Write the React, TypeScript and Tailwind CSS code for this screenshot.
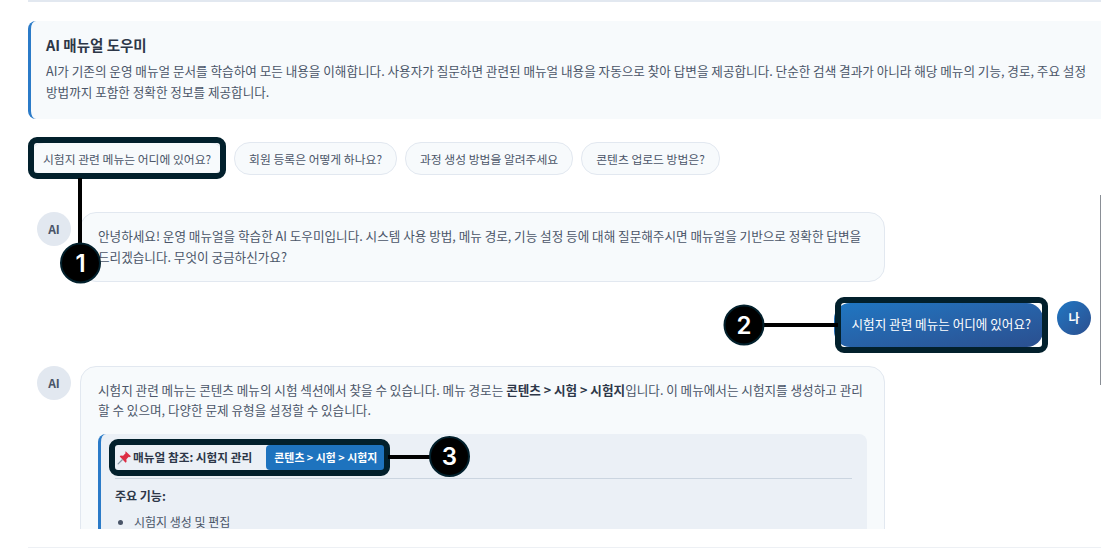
const font = { fontFamily: '"Noto Sans CJK KR", Inter, sans-serif' };

const chips = ["시험지 관련 메뉴는 어디에 있어요?", "회원 등록은 어떻게 하나요?", "과정 생성 방법을 알려주세요", "콘텐츠 업로드 방법은?"];

function AiAvatar() {
  return (
    <div className="w-[34px] h-[34px] rounded-full bg-[#e2e8f0] text-[#4a5568] text-[12px] font-bold flex items-center justify-center shrink-0">
      AI
    </div>
  );
}

function PinIcon() {
  return (
    <svg width="15" height="15" viewBox="0 0 16 16" className="shrink-0">
      <path d="M9.2 1.2l5.6 5.4-1 1-1.2-.3-2.6 2.6.2 2.6-1 1L2.9 6.9l1-1 2.6.2 2.6-2.6-.2-1.3z" fill="#dd2e44" />
      <path d="M5.6 10.4L1.2 14.8" stroke="#8899a6" strokeWidth="1.4" strokeLinecap="round" />
    </svg>
  );
}

// tutorial callouts drawn on top of the screenshot
function Callouts() {
  const marks = [
    { n: 1, cx: 80.5, cy: 263 },
    { n: 2, cx: 744, cy: 325 },
    { n: 3, cx: 449.5, cy: 456.5 },
  ];
  return (
    <svg className="absolute inset-0 pointer-events-none" width="1101" height="548" viewBox="0 0 1101 548">
      <g fill="none" stroke="#02202c" strokeWidth="6">
        <rect x="31" y="140" width="192" height="36" rx="6" />
        <rect x="838" y="300" width="207" height="50" rx="6" />
        <rect x="112" y="442" width="275" height="31" rx="6" />
      </g>
      <g stroke="#000" strokeWidth="4">
        <line x1="80" y1="178" x2="80" y2="245" />
        <line x1="762" y1="325" x2="838" y2="325" />
        <line x1="388" y1="457" x2="432" y2="457" />
      </g>
      {marks.map((m) => (
        <g key={m.n}>
          <circle cx={m.cx} cy={m.cy} r="19.5" fill="#000" stroke="#02202c" strokeWidth="2" />
          <text x={m.cx} y={m.cy + 8.5} textAnchor="middle" fill="#fff" fontSize="24" fontWeight="600" fontFamily="Inter, sans-serif">
            {m.n}
          </text>
        </g>
      ))}
    </svg>
  );
}

export default function App() {
  return (
    <div className="relative w-[1101px] h-[548px] overflow-hidden bg-white" style={font}>
      <div className="pl-[28px] flex flex-col">
        <div className="h-[2px] bg-[#e2e8f0]" />
        <div className="mt-[19px] h-[98px] bg-[#f7fafc] border-l-[3px] border-[#2b7bc8] rounded-l-lg pl-[15px] pr-[10px] pt-[13px]">
          <h3 className="text-[14.5px] leading-[22px] font-bold text-[#2d3748]">AI 매뉴얼 도우미</h3>
          <p className="mt-[5px] text-[12.6px] leading-[20.8px] text-[#4a5568]">
            AI가 기존의 운영 매뉴얼 문서를 학습하여 모든 내용을 이해합니다. 사용자가 질문하면 관련된 매뉴얼 내용을 자동으로 찾아 답변을 제공합니다. 단순한 검색 결과가 아니라 해당 메뉴의 기능, 경로, 주요 설정 방법까지 포함한 정확한 정보를 제공합니다.
          </p>
        </div>
        <div className="mt-[23px] flex gap-2">
          {chips.map((c) => (
            <div key={c} className="h-[33px] px-[14px] rounded-2xl bg-[#f7fafc] border border-[#e2e8f0] text-[11.8px] text-[#4a5568] flex items-center whitespace-nowrap">
              {c}
            </div>
          ))}
        </div>
      </div>

      <div className="mt-[37px] ml-[37px] w-[1054px] h-[317px] overflow-hidden flex flex-col gap-[19px]">
        <div className="flex gap-[9px] items-start">
          <AiAvatar />
          <div className="w-[805px] rounded-2xl bg-[#f7fafc] border border-[#e2e8f0] px-[17px] py-[13px] text-[12.6px] leading-[20.8px] text-[#4a5568]">
            안녕하세요! 운영 매뉴얼을 학습한 AI 도우미입니다. 시스템 사용 방법, 메뉴 경로, 기능 설정 등에 대해 질문해주시면 매뉴얼을 기반으로 정확한 답변을 드리겠습니다. 무엇이 궁금하신가요?
          </div>
        </div>
        <div className="flex justify-end gap-[14px] items-start">
          <div className="mt-[2px] h-[44px] pl-[18px] pr-[12px] rounded-2xl bg-gradient-to-br from-[#1e77c3] to-[#2a4f8f] text-white text-[12.6px] flex items-center">
            시험지 관련 메뉴는 어디에 있어요?
          </div>
          <div className="w-[34px] h-[34px] rounded-full bg-gradient-to-br from-[#1e77c3] to-[#2a4f8f] text-white text-[12px] font-bold flex items-center justify-center">
            나
          </div>
        </div>
        <div className="flex gap-[9px] items-start">
          <AiAvatar />
          <div className="w-[805px] rounded-2xl bg-[#f7fafc] border border-[#e2e8f0] px-[17px] pt-[13px] pb-4 text-[12.6px] leading-[20.8px] text-[#4a5568]">
            <p>
              시험지 관련 메뉴는 콘텐츠 메뉴의 시험 섹션에서 찾을 수 있습니다. 메뉴 경로는 <strong className="font-bold text-[#2d3748]">콘텐츠 &gt; 시험 &gt; 시험지</strong>입니다. 이 메뉴에서는 시험지를 생성하고 관리할 수 있으며, 다양한 문제 유형을 설정할 수 있습니다.
            </p>
            <div className="mt-[13px] w-[769px] bg-[#ebf0f6] border-l-[3px] border-[#2b7bc8] rounded-lg pl-[14px] pr-[15px] pt-[11px]">
              <div className="flex items-center pb-[8px] border-b border-[#cbd5e0] text-[#2d3748] font-semibold text-[11.7px]">
                <span className="pl-[2px]"><PinIcon /></span>
                <span className="ml-[1px]">매뉴얼 참조: 시험지 관리</span>
                <span className="ml-[14px] h-[25px] w-[119px] bg-[#1e73be] rounded-l text-white text-[10.9px] font-bold flex items-center justify-center">콘텐츠 &gt; 시험 &gt; 시험지</span>
              </div>
              <p className="mt-[7px] text-[#2d3748] font-bold text-[12px]">주요 기능:</p>
              <ul className="mt-[5px] list-disc pl-[19px] pb-4 text-[12px]">
                <li>시험지 생성 및 편집</li>
              </ul>
            </div>
          </div>
        </div>
      </div>

      <div className="absolute left-[28px] right-0 bottom-0 h-px bg-[#edf0f4]" />
      <div className="absolute right-0 top-[195px] w-px h-[190px] bg-[#8a8f96]" />
      <Callouts />
    </div>
  );
}
